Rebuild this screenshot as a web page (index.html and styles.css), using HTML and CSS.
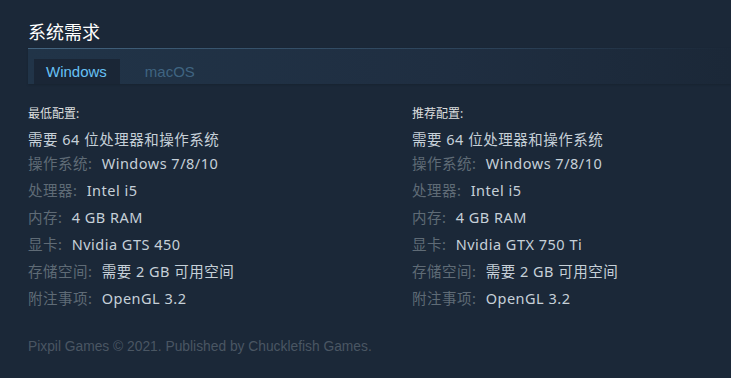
FILE: index.html
```html
<!DOCTYPE html>
<html lang="zh">
<head>
  <meta charset="UTF-8" />
  <title>系统需求</title>
  <link rel="stylesheet" href="styles.css">
</head>
<body>
  <div class="sysreq">
    <h2>系统需求</h2>

    <div class="tabs">
      <div class="tab active">Windows</div>
      <div class="tab">macOS</div>
    </div>

    <div class="columns">
      <div class="col">
        <div class="col-title">最低配置:</div>
        <ul>
          <li class="first">需要 64 位处理器和操作系统</li>
          <li><span class="label">操作系统:</span> Windows 7/8/10</li>
          <li><span class="label">处理器:</span> Intel i5</li>
          <li><span class="label">内存:</span> 4 GB RAM</li>
          <li><span class="label">显卡:</span> Nvidia GTS 450</li>
          <li><span class="label">存储空间:</span> 需要 2 GB 可用空间</li>
          <li><span class="label">附注事项:</span> OpenGL 3.2</li>
        </ul>
      </div>
      <div class="col">
        <div class="col-title">推荐配置:</div>
        <ul>
          <li class="first">需要 64 位处理器和操作系统</li>
          <li><span class="label">操作系统:</span> Windows 7/8/10</li>
          <li><span class="label">处理器:</span> Intel i5</li>
          <li><span class="label">内存:</span> 4 GB RAM</li>
          <li><span class="label">显卡:</span> Nvidia GTX 750 Ti</li>
          <li><span class="label">存储空间:</span> 需要 2 GB 可用空间</li>
          <li><span class="label">附注事项:</span> OpenGL 3.2</li>
        </ul>
      </div>
    </div>

    <p class="legal">Pixpil Games © 2021. Published by Chucklefish Games.</p>
  </div>
</body>
</html>
```

FILE: styles.css
```css
/* Base */
body {
  margin: 0;
  background: #1b2838;
  font-family: 'Noto Sans', 'Noto Sans CJK SC', sans-serif;
  color: #c6d4df;
}

.sysreq {
  padding: 20px 0 0 28px;
}

/* Title */
.sysreq h2 {
  margin: 0;
  font-size: 18px;
  line-height: 24px;
  font-weight: normal;
  color: #ffffff;
}

/* Tabs */
.tabs {
  margin-top: 4px;
  height: 25px;
  padding: 10px 0 0 6px;
  display: flex;
  gap: 13px;
  border-top: 1px solid transparent;
  border-image: linear-gradient(to right, #44647f 0%, #37536c 30%, #2a3f55 70%, #1b2838 100%) 1;
  background: linear-gradient(to right, #213448 0%, #1f2e41 60%, #1b2838 100%);
  box-shadow: 0 1px 2px rgba(0, 0, 0, 0.15);
}

.tab {
  padding: 0 12px;
  line-height: 25px;
  font-family: 'Liberation Sans', Arial, sans-serif;
  font-size: 15px;
  color: #3f6481;
}

.tab.active {
  padding-right: 13px;
  background: #1a2636;
  color: #67c1f5;
}

/* Columns */
.columns {
  margin-top: 21px;
  display: grid;
  grid-template-columns: 384px 1fr;
}

.col-title {
  font-size: 12px;
  line-height: 18px;
  color: #dcdedf;
}

.col ul {
  list-style: none;
  margin: 7px 0 0;
  padding: 0;
}

.col li {
  font-size: 14.5px;
  line-height: 18px;
  letter-spacing: 0.5px;
  margin-bottom: 9px;
  color: #c6d0d8;
}

.col li.first {
  margin-bottom: 6px;
}

.label {
  margin-right: 5px;
  color: #5f6b76;
}

/* Footer */
.legal {
  margin: 22px 0 0;
  font-family: 'Liberation Sans', Arial, sans-serif;
  font-size: 13.8px;
  line-height: 18px;
  color: #4a5663;
}
```
